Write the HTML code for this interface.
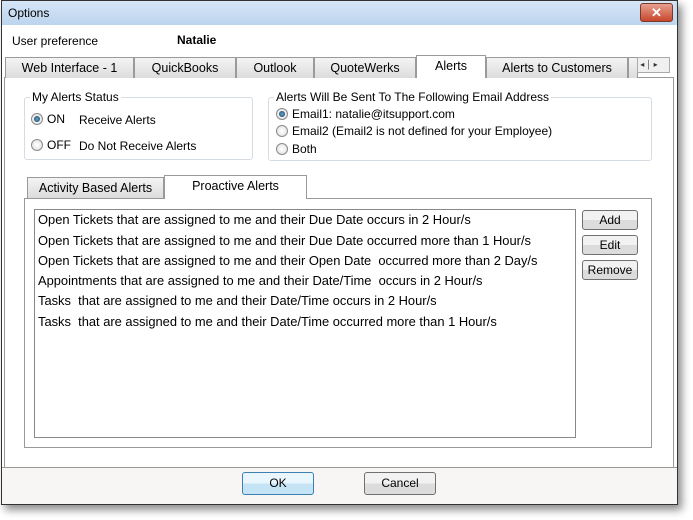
<!DOCTYPE html>
<html><head><style>
*{margin:0;padding:0;box-sizing:border-box}
body{width:693px;height:520px;background:#fff;position:relative;overflow:hidden;font-family:"Liberation Sans",sans-serif;font-size:12px;color:#000}
.a{position:absolute}
.win{left:1px;top:0;width:677px;height:505px;border:1px solid #333;background:#c6dcf0;box-shadow:4px 5px 8px rgba(0,0,0,.45)}
.title{left:2px;top:1px;width:673px;height:24px;background:linear-gradient(#d6e6f7,#bcd4ee)}
.tab{position:absolute;top:57px;height:21px;border:1px solid #9a9a9a;border-bottom:none;background:linear-gradient(#f4f4f4,#dcdcdc);text-align:center;line-height:20px;font-size:12.5px}
.grp{position:absolute;border:1px solid #d5dce4;border-radius:3px}
.lg{position:absolute;background:#fff;padding:0 2px;top:-8px;font-size:12px}
.rad{position:absolute;width:12px;height:12px;border-radius:50%;border:1px solid #8a8a8a;background:radial-gradient(#fff,#ddd)}
.rad.on::after{content:"";position:absolute;left:2px;top:2px;width:6px;height:6px;border-radius:50%;background:radial-gradient(#6ac,#135)}
.btn{position:absolute;border:1px solid #707070;border-radius:3px;background:linear-gradient(#f2f2f2 50%,#dcdcdc 50%);text-align:center;font-size:12px}
.li{position:absolute;left:38px;font-size:12.9px}
</style></head><body>
<div class="a win"></div>
<div class="a title"></div>
<div class="a" style="left:8px;top:6px;font-size:12px">Options</div>
<div class="a" style="left:640px;top:3px;width:33px;height:19px;border:1px solid #7a3a2a;border-radius:3px;background:linear-gradient(#e8a090,#c8462c);color:#fff;font-weight:bold;text-align:center;line-height:17px;font-size:13px">✕</div>
<div class="a" style="left:2px;top:25px;width:675px;height:442px;background:#fff"></div>
<div class="a" style="left:2px;top:467px;width:675px;height:37px;background:#f7f6f5;border-top:1px solid #999"></div>
<div class="a" style="left:12px;top:34px">User preference</div>
<div class="a" style="left:177px;top:33px;font-weight:bold">Natalie</div>
<div class="a" style="left:4px;top:77px;width:670px;height:391px;border:1px solid #999;border-bottom:none"></div>
<div class="tab" style="left:5px;width:129px">Web Interface - 1</div>
<div class="tab" style="left:134px;width:102px">QuickBooks</div>
<div class="tab" style="left:236px;width:78px">Outlook</div>
<div class="tab" style="left:314px;width:102px">QuoteWerks</div>
<div class="tab" style="left:416px;top:55px;height:23px;width:70px;background:#fff;line-height:20px">Alerts</div>
<div class="tab" style="left:486px;width:142px">Alerts to Customers</div>
<div class="tab" style="left:628px;width:10px"></div>
<div class="a" style="left:637px;top:57px;width:33px;height:16px;border:1px solid #aaa;background:#f0f0f0;font-size:8px;line-height:14px;color:#333">&nbsp;◂ │ ▸</div>
<div class="grp" style="left:24px;top:97px;width:229px;height:63px"><span class="lg" style="left:5px">My Alerts Status</span></div>
<div class="rad on" style="left:31px;top:113px"></div><div class="a" style="left:47px;top:112px">ON</div><div class="a" style="left:79px;top:113px">Receive Alerts</div>
<div class="rad" style="left:31px;top:139px"></div><div class="a" style="left:47px;top:138px">OFF</div><div class="a" style="left:79px;top:139px">Do Not Receive Alerts</div>
<div class="grp" style="left:268px;top:97px;width:384px;height:64px"><span class="lg" style="left:5px">Alerts Will Be Sent To The Following Email Address</span></div>
<div class="rad on" style="left:276px;top:108px"></div><div class="a" style="left:292px;top:107px">Email1: natalie@itsupport.com</div>
<div class="rad" style="left:276px;top:125px"></div><div class="a" style="left:292px;top:124px">Email2 (Email2 is not defined for your Employee)</div>
<div class="rad" style="left:276px;top:143px"></div><div class="a" style="left:292px;top:142px">Both</div>
<div class="a" style="left:24px;top:198px;width:628px;height:250px;border:1px solid #999"></div>
<div class="tab" style="left:27px;top:177px;width:137px">Activity Based Alerts</div>
<div class="tab" style="left:164px;top:175px;height:24px;width:143px;background:#fff;line-height:20px">Proactive Alerts</div>
<div class="a" style="left:34px;top:209px;width:542px;height:229px;border:1px solid #888"></div>
<div class="li" style="top:212px">Open Tickets that are assigned to me and their Due Date occurs in 2 Hour/s</div>
<div class="li" style="top:233px">Open Tickets that are assigned to me and their Due Date occurred more than 1 Hour/s</div>
<div class="li" style="top:253px">Open Tickets that are assigned to me and their Open Date&nbsp; occurred more than 2 Day/s</div>
<div class="li" style="top:273px">Appointments that are assigned to me and their Date/Time&nbsp; occurs in 2 Hour/s</div>
<div class="li" style="top:293px">Tasks&nbsp; that are assigned to me and their Date/Time occurs in 2 Hour/s</div>
<div class="li" style="top:314px">Tasks&nbsp; that are assigned to me and their Date/Time occurred more than 1 Hour/s</div>
<div class="btn" style="left:582px;top:210px;width:56px;height:20px;line-height:18px">Add</div>
<div class="btn" style="left:582px;top:235px;width:56px;height:20px;line-height:18px">Edit</div>
<div class="btn" style="left:582px;top:260px;width:56px;height:20px;line-height:18px">Remove</div>
<div class="btn" style="left:242px;top:472px;width:72px;height:23px;line-height:21px;border-color:#3c7fb1;background:linear-gradient(#eaf6fd 50%,#c4e4f6 50%)">OK</div>
<div class="btn" style="left:364px;top:472px;width:72px;height:23px;line-height:21px">Cancel</div>
</body></html>
